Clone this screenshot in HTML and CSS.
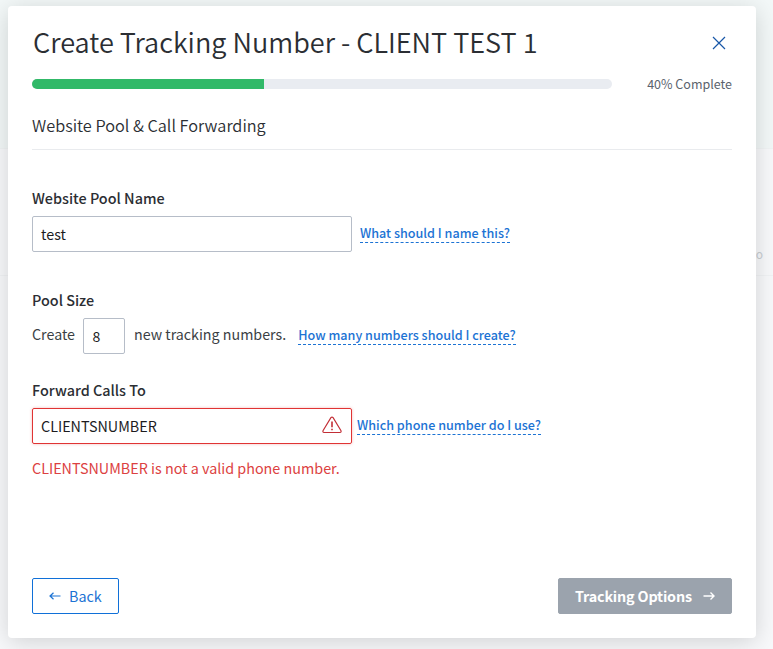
FILE: index.html
```html
<!DOCTYPE html>
<html lang="en">
<head>
<meta charset="utf-8">
<title>Create Tracking Number</title>
<link rel="stylesheet" href="styles.css">
</head>
<body>
<div class="backdrop"><div class="band band-top"></div><div class="band band-row"><span>o</span></div></div>
<main class="modal">
  <header class="head">
    <h1>Create Tracking Number - CLIENT TEST 1</h1>
    <button class="close" aria-label="Close"><svg width="14" height="14" viewBox="0 0 14 14"><path d="M1 1L13 13M13 1L1 13"/></svg></button>
  </header>
  <div class="progress">
    <div class="track"><div class="fill" style="width:40%"></div></div>
    <span>40% Complete</span>
  </div>
  <h2>Website Pool &amp; Call Forwarding</h2>
  <section class="field field-name">
    <label>Website Pool Name</label>
    <div class="row"><div class="input"><span>test</span></div><a class="help">What should I name this?</a></div>
  </section>
  <section class="field field-size">
    <label>Pool Size</label>
    <div class="row"><span class="body">Create</span><div class="input small"><span>8</span></div><span class="body">new tracking numbers.</span><a class="help help-size">How many numbers should I create?</a></div>
  </section>
  <section class="field field-forward">
    <label>Forward Calls To</label>
    <div class="row"><div class="input invalid"><span>CLIENTSNUMBER</span><svg width="20" height="18" viewBox="0 0 20 18"><path d="M8.9 1.7Q10 .4 11.1 1.7L19 14.8Q19.5 16.5 18 16.5H2Q.5 16.5 1 14.8Z"/><path class="mark" d="M10 5.6V11.2M10 12.7V14.2"/></svg></div><a class="help help-forward">Which phone number do I use?</a></div>
    <p class="error">CLIENTSNUMBER is not a valid phone number.</p>
  </section>
  <footer class="foot">
    <button class="btn back"><svg width="12" height="10" viewBox="0 0 12 10"><path d="M11.5 5H1M4.5 1.8L1 5L4.5 8.2"/></svg><span>Back</span></button>
    <button class="btn next"><span>Tracking Options</span><svg width="12" height="10" viewBox="0 0 12 10"><path d="M.5 5H11M7.5 1.5L11 5L7.5 8.5"/></svg></button>
  </footer>
</main>
</body>
</html>
```
FILE: styles.css
```css
* { box-sizing: border-box; }
body {
  margin: 0;
  height: 649px;
  overflow: hidden;
  padding: 6px 17px 11px 8px;
  background: #f8f9fb;
  font-family: "Noto Sans CJK SC", "Open Sans", sans-serif;
  font-size: 14.35px;
  line-height: 20px;
  color: #2b2e33;
}
h1, h2, p { margin: 0; font-weight: 400; }
button { font: inherit; margin: 0; }
svg { display: block; fill: none; flex: none; }
span, a { white-space: nowrap; }
.backdrop { position: absolute; inset: 0; overflow: hidden; }
.band-top { height: 149px; background: #f3f8f8; border-bottom: 1px solid #f1f4f5; }
.band-row { height: 127px; border-bottom: 1px solid #f1f3f5; text-align: right; padding: 95px 10px 0 0; color: #c9ced3; font-size: 12px; }
.modal {
  position: relative;
  width: 748px;
  height: 632px;
  padding: 16px 24px 24px;
  display: flex;
  flex-direction: column;
  background: #fff;
  border-radius: 4px;
  box-shadow: 0 4px 24px rgba(0, 0, 0, .16);
}
.head { display: flex; justify-content: space-between; height: 40px; }
h1 { font-size: 27.1px; line-height: 40px; padding-left: 1px; font-weight: 350; }
.close { width: 14px; height: 14px; margin: 14px 6px 0 0; padding: 0; border: 0; background: none; }
.close svg { stroke: #1857a8; stroke-width: 1.2; }
.progress { display: flex; justify-content: space-between; align-items: center; margin-top: 12px; height: 20px; font-size: 12.5px; color: #5b636d; }
.track { width: 580px; height: 10px; border-radius: 5px; overflow: hidden; background: #e9ecf1; }
.fill { height: 10px; background: #31b968; }
h2 { font-size: 16.3px; line-height: 22px; height: 36px; margin-top: 20px; border-bottom: 1px solid #e9ebee; font-weight: 350; }
.field label { display: block; font-size: 14.4px; font-weight: 500; height: 28px; }
.row { display: flex; align-items: center; }
.field-name { margin-top: 38px; height: 102px; }
.field-size { height: 90px; }
.input { width: 320px; height: 36px; padding: 0 8px; border: 1px solid #b6bdc8; border-radius: 2px; display: flex; align-items: center; justify-content: space-between; color: #1c1c1e; }
.input.small { width: 42px; margin: 0 9px 0 8px; padding-left: 8.5px; font-size: 14px; }
.body { color: #3b3f45; font-size: 14.25px; padding-bottom: 4px; }
.input.invalid { border-color: #e03434; box-shadow: 0 0 3px rgba(224, 52, 52, .35); }
.invalid svg { stroke: #c22e36; stroke-width: 1.15; margin: -2px 1px 0 0; }
.invalid .mark { stroke-width: 1.6; }
.help { font-size: 12.6px; line-height: 18px; font-weight: 500; color: #1c73d4; border-bottom: 1px dashed #1c73d4; margin: 0 0 2px 8px; }
.help-size { margin-left: 12px; }
.help-forward { margin-left: 5px; }
.error { margin-top: 14px; color: #dc4141; }
.foot { display: flex; justify-content: space-between; margin-top: auto; }
.btn { height: 36px; display: flex; align-items: center; border-radius: 2px; padding: 0 16px; border: 1px solid #1070d8; background: #fff; color: #1c73d4; }
.btn svg { stroke: currentColor; stroke-width: 1.2; }
.back { width: 87px; gap: 8px; }
.next { width: 174px; justify-content: space-between; background: #9ba3ad; border-color: #9ba3ad; color: #fff; font-weight: 600; letter-spacing: -.18px; }
.next svg { stroke-width: 1.4; }
```
